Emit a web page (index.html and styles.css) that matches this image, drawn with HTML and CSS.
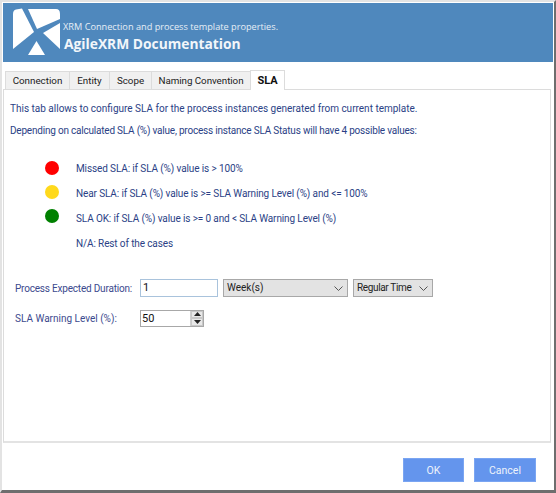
FILE: index.html
```html
<!DOCTYPE html>
<html lang="en">
<head>
<meta charset="utf-8">
<title>AgileXRM Documentation</title>
<link rel="stylesheet" href="styles.css">
</head>
<body>
<div class="window">
  <header class="banner">
    <svg class="logo" width="50" height="50" viewBox="0 0 50 50" aria-hidden="true">
      <path fill="#fff" d="M0 6Q0 2 3 1.500L9 .5 21 24 0 41Z"/>
      <path fill="#fff" d="M15 1H43Q47 1 47 6V11L24 21Z"/>
      <path fill="#fff" d="M30 25 47 15V41Z"/>
      <path fill="#fff" d="M15 47H32L23.500 33Z"/>
    </svg>
    <div class="banner-text">
      <div class="subtitle">XRM Connection and process template properties.</div>
      <div class="title">AgileXRM Documentation</div>
    </div>
  </header>
  <nav class="tabs">
    <span class="tab tab-connection">Connection</span>
    <span class="tab tab-entity">Entity</span>
    <span class="tab tab-scope">Scope</span>
    <span class="tab tab-naming">Naming Convention</span>
    <span class="tab tab-active">SLA</span>
  </nav>
  <main class="panel">
    <p class="intro">This tab allows to configure SLA for the process instances generated from current template.</p>
    <p class="intro intro-tight">Depending on calculated SLA (%) value, process instance SLA Status will have 4 possible values:</p>
    <ul class="legend">
      <li class="legend-row"><span class="dot dot-red"></span>Missed SLA: if SLA (%) value is &gt; 100%</li>
      <li class="legend-row"><span class="dot dot-yellow"></span>Near SLA: if SLA (%) value is &gt;= SLA Warning Level (%) and &lt;= 100%</li>
      <li class="legend-row"><span class="dot dot-green"></span>SLA OK: if SLA (%) value is &gt;= 0 and &lt; SLA Warning Level (%)</li>
      <li class="legend-row"><span class="dot"></span>N/A: Rest of the cases</li>
    </ul>
    <div class="form-row">
      <span class="label label-tight">Process Expected Duration:</span>
      <span class="input input-duration">1</span>
      <span class="select select-unit">Week(s)<svg class="chev" width="9" height="5" viewBox="0 0 9 5"><path d="M.5.5 4.500 4.500 8.500.5" fill="none" stroke="#555"/></svg></span>
      <span class="select select-time"><span class="select-time-text">Regular Time</span><svg class="chev" width="9" height="5" viewBox="0 0 9 5"><path d="M.5.5 4.500 4.500 8.500.5" fill="none" stroke="#555"/></svg></span>
    </div>
    <div class="form-row form-row-second">
      <span class="label">SLA Warning Level (%):</span>
      <span class="spinner">
        <span class="spin-value">50</span>
        <span class="spin-buttons">
          <span class="spin-btn"><svg width="7" height="4" viewBox="0 0 7 4"><path d="M3.500 0 7 4H0Z" fill="#222"/></svg></span>
          <span class="spin-btn"><svg width="7" height="4" viewBox="0 0 7 4"><path d="M3.500 4 7 0H0Z" fill="#222"/></svg></span>
        </span>
      </span>
    </div>
  </main>
  <footer class="footer">
    <button class="btn btn-ok">OK</button>
    <button class="btn btn-cancel">Cancel</button>
  </footer>
</div>
</body>
</html>
```
FILE: styles.css
```css
* { box-sizing: border-box; }
html, body { margin: 0; padding: 0; }
body { width: 556px; height: 493px; overflow: hidden; background: #fff; font-family: Roboto, "Open Sans", sans-serif; font-size: 10px; }
.window { width: 556px; height: 493px; display: flex; flex-direction: column; background: #fff; border-style: solid; border-color: #e3e3e3 #6e6e6e #6e6e6e #e3e3e3; border-width: 2px 2px 3px 2px; padding: 1px 1px 0 1px; }
.banner { height: 59px; flex: none; background: #4f88bd; display: flex; align-items: flex-start; padding: 5px 0 0 10px; color: #fff; }
.logo { flex: none; }
.banner-text { margin-left: 0; padding-top: 12px; }
.subtitle { font-family: "Open Sans", sans-serif; font-size: 9.2px; line-height: 14px; color: #e6eef6; }
.title { font-family: "Open Sans", sans-serif; font-size: 13.8px; line-height: 20px; font-weight: 700; color: #f2f6fa; padding-left: 1px; }
.tabs { display: flex; align-items: flex-end; height: 27px; flex: none; padding-left: 2px; }
.tab { height: 18px; line-height: 17px; text-align: center; background: #f0f0f0; border: 1px solid #dcdcdc; border-bottom: 0; margin-right: -1px; color: #222; white-space: nowrap; font-size: 9.8px; }
.tab-connection { width: 65px; }
.tab-entity { width: 41px; }
.tab-scope { width: 43px; }
.tab-naming { width: 100px; letter-spacing: -.05px; }
.tab-active { width: 35px; height: 20px; line-height: 20px; background: #fff; font-weight: 700; margin-bottom: -1px; position: relative; z-index: 1; color: #111; font-size: 11px; }
.panel { width: 548px; height: 354px; flex: none; border: 1px solid #dcdcdc; border-bottom: 2px solid #e3e3e3; padding: 0 6px; color: #2b3f86; }
.intro { margin: 0; line-height: 14px; padding-top: 8px; }
.intro:first-child { padding-top: 12px; }
.intro-tight { letter-spacing: -.21px; }
.legend { list-style: none; margin: 18px 0 0; padding: 0 0 0 35px; letter-spacing: -.12px; }
.legend-row { display: flex; align-items: center; height: 25px; }
.dot { flex: none; width: 14px; height: 14px; border-radius: 50%; margin-right: 17px; }
.dot-red { background: #ff0000; margin-top: -2px; }
.dot-yellow { background: #ffd91c; margin-top: -4px; }
.dot-green { background: #008000; margin-top: -6px; }
.form-row { display: flex; align-items: center; margin-top: 23px; padding-left: 5px; height: 18px; }
.form-row-second { margin-top: 12px; }
.label { width: 125px; flex: none; color: #3c4a8e; white-space: nowrap; }
.label-tight { letter-spacing: -.2px; }
.input { width: 78px; height: 18px; line-height: 16px; border: 1px solid #a9c3dc; padding-left: 2px; font-size: 11px; color: #111; flex: none; }
.select { height: 18px; line-height: 16px; background: #e3e3e3; border: 1px solid #a8a8a8; padding: 0 4px 0 3px; color: #222; flex: none; display: flex; align-items: center; justify-content: space-between; white-space: nowrap; }
.select-unit { width: 125px; margin-left: 5px; }
.select-time { width: 80px; margin-left: 5px; }
.select-time-text { letter-spacing: -.35px; }
.spinner { width: 64px; height: 17px; border: 1px solid #a8a8a8; display: flex; flex: none; justify-content: space-between; }
.spin-value { padding-left: 1px; line-height: 15px; font-size: 11px; color: #111; }
.spin-buttons { width: 13px; display: flex; flex-direction: column; border-left: 1px solid #d0d0d0; }
.spin-btn { flex: 1; background: #e8e8e8; display: flex; align-items: center; justify-content: center; border: 1px solid #c8c8c8; }
.footer { display: flex; padding: 15px 0 0 400px; gap: 10px; }
.btn { height: 24px; border: 1px solid #7aa5f2; background: #6495ed; color: #eef3fb; font-family: inherit; font-size: 10.5px; padding: 0; }
.btn-ok { width: 61px; }
.btn-cancel { width: 62px; }
```
